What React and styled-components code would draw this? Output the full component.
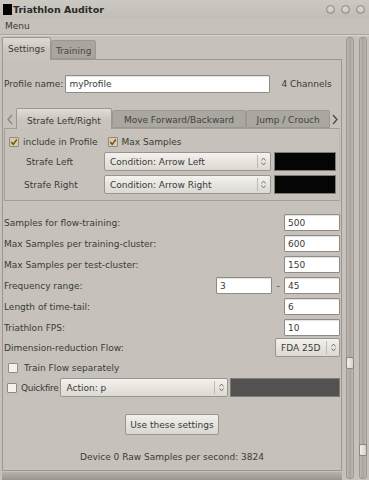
import React from "react";
import styled, { createGlobalStyle } from "styled-components";

const GlobalStyle = createGlobalStyle`
  html, body {
    margin: 0;
    padding: 0;
    background: #c6c2bb;
  }
  * {
    box-sizing: border-box;
  }
`;

const Window = styled.div`
  width: 369px;
  height: 480px;
  background: #c6c2bb;
  font-family: "DejaVu Sans", sans-serif;
  font-size: 9px;
  color: #3a3a38;
  display: flex;
  flex-direction: column;
  overflow: hidden;
`;

const TitleBar = styled.div`
  height: 18px;
  flex-shrink: 0;
  display: flex;
  align-items: center;
  padding: 0 4px 0 3px;
  background: linear-gradient(#ccc8c2, #c2beb7);
`;

const AppIcon = styled.div`
  width: 9px;
  height: 11px;
  background: #000;
  margin-right: 1px;
`;

const Title = styled.div`
  font-weight: bold;
  font-size: 9.5px;
  color: #2a2a28;
  flex: 1;
`;

const WinButtons = styled.div`
  display: flex;
  gap: 6px;
  margin-top: 1px;
`;

const WinButton = styled.div`
  width: 9px;
  height: 9px;
  border-radius: 50%;
  border: 1px solid #8f8b85;
  background: radial-gradient(circle at 50% 40%, #d6d2cc 35%, #a9a59e 100%);
`;

const MenuBar = styled.div`
  height: 17px;
  flex-shrink: 0;
  display: flex;
  align-items: center;
  padding-left: 5px;
  border-bottom: 1px solid #a9a59e;
  box-shadow: 0 1px 0 #d8d4ce;
`;

const Body = styled.div`
  flex: 1;
  min-height: 0;
  display: flex;
  padding-left: 2px;
  margin-top: 1px;
`;

const MainColumn = styled.div`
  width: 340px;
  flex-shrink: 0;
  display: flex;
  flex-direction: column;
`;

const TabStrip = styled.div`
  display: flex;
  align-items: flex-end;
  height: 23px;
  flex-shrink: 0;
`;

const Tab = styled.div`
  height: ${(p) => (p.$active ? "23px" : "19px")};
  padding: 0 ${(p) => (p.$active ? "5px" : "4px")};
  display: flex;
  align-items: center;
  border: 1px solid #9c9891;
  border-bottom: ${(p) => (p.$active ? "none" : "1px solid #9c9891")};
  border-radius: 2px 2px 0 0;
  background: ${(p) =>
    p.$active ? "linear-gradient(#dedad4, #c8c4bd 60%)" : "#a9a59f"};
  color: ${(p) => (p.$active ? "#3a3a38" : "#4a4844")};
  margin-bottom: ${(p) => (p.$active ? "-1px" : "0")};
  position: relative;
  z-index: ${(p) => (p.$active ? 1 : 0)};
  padding-top: ${(p) => (p.$active ? "0" : "3px")};
`;

const Panel = styled.div`
  height: 412px;
  flex-shrink: 0;
  border: 1px solid #9c9891;
  display: flex;
  flex-direction: column;
  padding: 0 1px 0 1px;
`;

const Row = styled.div`
  display: flex;
  flex-shrink: 0;
  align-items: center;
  height: ${(p) => p.$h || 17}px;
  margin-top: ${(p) => p.$mt || 0}px;
  justify-content: ${(p) => p.$justify || "flex-start"};
`;

const Label = styled.span`
  white-space: nowrap;
  flex: ${(p) => (p.$grow ? 1 : "none")};
  width: ${(p) => (p.$w ? p.$w + "px" : "auto")};
  text-align: ${(p) => p.$align || "left"};
  padding-left: ${(p) => p.$pl || 0}px;
  letter-spacing: ${(p) => p.$ls || 0}px;
`;

const TextInput = styled.div`
  width: ${(p) => p.$w}px;
  height: ${(p) => p.$h || 17}px;
  background: #fff;
  border: 1px solid #8e8a84;
  border-radius: 1px;
  box-shadow: inset 0 1px 1px rgba(0, 0, 0, 0.12);
  display: flex;
  align-items: center;
  padding-left: 3px;
  color: #3a3a38;
  margin-left: ${(p) => p.$ml || 0}px;
`;

const Combo = styled.div`
  width: ${(p) => p.$w}px;
  height: ${(p) => p.$h || 19}px;
  border: 1px solid #9a968f;
  border-radius: 2px;
  background: linear-gradient(#f4f2ef, #dcd8d2);
  display: flex;
  align-items: center;
  margin-left: ${(p) => p.$ml || 0}px;
`;

const ComboText = styled.span`
  flex: 1;
  padding-left: 5px;
  white-space: nowrap;
  overflow: hidden;
`;

const ComboArrow = styled.span`
  width: 13px;
  border-left: 1px solid #bfbbb4;
  display: flex;
  align-items: center;
  justify-content: center;
  height: 13px;
`;

const Swatch = styled.div`
  width: ${(p) => p.$w}px;
  height: 19px;
  background: ${(p) => p.$color};
  border: 1px solid #7f7b75;
  margin-left: ${(p) => p.$ml || 0}px;
`;

const InnerTabs = styled.div`
  display: flex;
  flex-shrink: 0;
  align-items: flex-end;
  height: 21px;
  margin-top: 14px;
`;

const Arrow = styled.span`
  width: ${(p) => p.$w || 12}px;
  display: flex;
  align-items: center;
  justify-content: center;
  align-self: center;
  padding-top: 3px;
`;

const InnerTab = styled.div`
  height: ${(p) => (p.$active ? "21px" : "18px")};
  width: ${(p) => p.$w}px;
  border: 1px solid #9c9891;
  border-bottom: ${(p) => (p.$active ? "none" : "1px solid #9c9891")};
  border-radius: 2px 2px 0 0;
  background: ${(p) =>
    p.$active ? "linear-gradient(#e0dcd6, #c8c4bd 60%)" : "#aaa6a0"};
  display: flex;
  align-items: center;
  justify-content: center;
  white-space: nowrap;
  margin-bottom: ${(p) => (p.$active ? "-1px" : "0")};
  position: relative;
  z-index: ${(p) => (p.$active ? 1 : 0)};
  color: ${(p) => (p.$active ? "#3a3a38" : "#45433f")};
  padding-top: ${(p) => (p.$active ? "3px" : "1px")};
`;

const InnerPanel = styled.div`
  height: 73px;
  flex-shrink: 0;
  border: 1px solid #a29e97;
  border-right-color: #bdb9b2;
  display: flex;
  flex-direction: column;
  padding: 5px 3px 0 4px;
`;

const Check = styled.span`
  width: 10px;
  height: 10px;
  border: 1px solid #8e8a84;
  border-radius: 1px;
  background: ${(p) => (p.$checked ? "#dcc9a6" : "#f4f2ef")};
  display: inline-flex;
  align-items: center;
  justify-content: center;
  margin-right: ${(p) => p.$mr || 4}px;
  margin-left: ${(p) => p.$ml || 0}px;
`;

const Button = styled.div`
  width: 94px;
  height: 21px;
  border: 1px solid #9a968f;
  border-radius: 2px;
  background: linear-gradient(#f2f0ec, #dad6d0);
  display: flex;
  align-items: center;
  justify-content: center;
`;

const BottomStrip = styled.div`
  flex: 1;
  background: linear-gradient(#b6b2ab, #99958f);
  margin-top: 1px;
`;

const SliderColumn = styled.div`
  flex: 1;
  display: flex;
  gap: 5px;
  padding: 1px 0 0 4px;
`;

const Track = styled.div`
  width: 8px;
  height: 442px;
  border: 1px solid #9c9891;
  border-radius: 3px;
  background: linear-gradient(90deg, #bdb9b2, #a8a49d 50%, #bdb9b2);
  position: relative;
`;

const Handle = styled.div`
  position: absolute;
  left: -1px;
  width: 8px;
  height: 12px;
  top: ${(p) => p.$top}px;
  border: 1px solid #8a8680;
  border-radius: 2px;
  background: linear-gradient(90deg, #f2f0ec, #d6d2cc);
`;

const UpDown = () => (
  <svg width="5" height="9" viewBox="0 0 5 9">
    <path d="M0.5 3.5 L2.5 1 L4.5 3.5 M0.5 5.5 L2.5 8 L4.5 5.5" fill="none" stroke="#6e6a64" strokeWidth="0.9" />
  </svg>
);

const Tick = () => (
  <svg width="8" height="8" viewBox="0 0 8 8">
    <path d="M1.2 4 L3.2 6.3 L6.8 1.5" fill="none" stroke="#6b4f24" strokeWidth="1.4" />
  </svg>
);

const Chevron = ({ dir }) => (
  <svg width="6" height="11" viewBox="0 0 6 11">
    <path
      d={dir === "left" ? "M5 1 L1 5.5 L5 10" : "M1 1 L5 5.5 L1 10"}
      fill="none"
      stroke={dir === "left" ? "#8a867f" : "#4a4843"}
      strokeWidth="1.3"
    />
  </svg>
);

const ComboBox = ({ w, h, ml, children }) => (
  <Combo $w={w} $h={h} $ml={ml}>
    <ComboText>{children}</ComboText>
    <ComboArrow>
      <UpDown />
    </ComboArrow>
  </Combo>
);

const fields = [
  ["Samples for flow-training:", "500"],
  ["Max Samples per training-cluster:", "600"],
  ["Max Samples per test-cluster:", "150"],
  ["Frequency range:", "45", "3"],
  ["Length of time-tail:", "6"],
  ["Triathlon FPS:", "10"],
];

export default function App() {
  return (
    <Window>
      <GlobalStyle />
      <TitleBar>
        <AppIcon />
        <Title>Triathlon Auditor</Title>
        <WinButtons>
          <WinButton />
          <WinButton />
          <WinButton />
        </WinButtons>
      </TitleBar>
      <MenuBar>Menu</MenuBar>
      <Body>
        <MainColumn>
          <TabStrip>
            <Tab $active>Settings</Tab>
            <Tab>Training</Tab>
          </TabStrip>
          <Panel>
            <Row $h={18} $mt={15}>
              <Label>Profile name:</Label>
              <TextInput $w={205} $h={18} $ml={2}>
                myProfile
              </TextInput>
              <Label $pl={11}>4 Channels</Label>
            </Row>

            <InnerTabs>
              <Arrow $w={12}>
                <Chevron dir="left" />
              </Arrow>
              <InnerTab $active $w={96}>
                Strafe Left/Right
              </InnerTab>
              <InnerTab $w={135}>Move Forward/Backward</InnerTab>
              <InnerTab $w={84}>Jump / Crouch</InnerTab>
              <Arrow $w={10}>
                <Chevron dir="right" />
              </Arrow>
            </InnerTabs>
            <InnerPanel>
              <Row $h={16}>
                <Check $checked>
                  <Tick />
                </Check>
                <Label>include in Profile</Label>
                <Check $checked $ml={10}>
                  <Tick />
                </Check>
                <Label>Max Samples</Label>
              </Row>
              <Row $h={19} $mt={2}>
                <Label $w={95} $pl={17}>
                  Strafe Left
                </Label>
                <ComboBox w={169}>Condition: Arrow Left</ComboBox>
                <Swatch $w={63} $color="#050505" $ml={3} />
              </Row>
              <Row $h={19} $mt={4}>
                <Label $w={95} $pl={15}>
                  Strafe Right
                </Label>
                <ComboBox w={169}>Condition: Arrow Right</ComboBox>
                <Swatch $w={63} $color="#050505" $ml={3} />
              </Row>
            </InnerPanel>

            {fields.map(([label, value, from], i) => (
              <Row key={label} $h={17} $mt={i === 0 ? 13 : 4}>
                <Label $grow>{label}</Label>
                {from && (
                  <>
                    <TextInput $w={56}>{from}</TextInput>
                    <Label $w={12} $align="center">
                      -
                    </Label>
                  </>
                )}
                <TextInput $w={56}>{value}</TextInput>
              </Row>
            ))}
            <Row $h={19} $mt={2}>
              <Label $grow>Dimension-reduction Flow:</Label>
              <ComboBox w={65}>FDA 25D</ComboBox>
            </Row>
            <Row $h={17} $mt={2}>
              <Check $ml={4} $mr={6} />
              <Label>Train Flow separately</Label>
            </Row>
            <Row $h={19} $mt={2}>
              <Check $ml={3} $mr={4} />
              <Label $ls={-0.3}>Quickfire</Label>
              <ComboBox w={168} ml={2}>
                Action: p
              </ComboBox>
              <Swatch $w={110} $color="#545250" $ml={2} />
            </Row>
            <Row $h={21} $mt={17} $justify="center">
              <Button>Use these settings</Button>
            </Row>
            <Row $h={14} $mt={15} $justify="center">
              <Label>Device 0 Raw Samples per second: 3824</Label>
            </Row>
          </Panel>
          <BottomStrip />
        </MainColumn>
        <SliderColumn>
          <Track>
            <Handle $top={319} />
          </Track>
          <Track>
            <Handle $top={406} />
          </Track>
        </SliderColumn>
      </Body>
    </Window>
  );
}
